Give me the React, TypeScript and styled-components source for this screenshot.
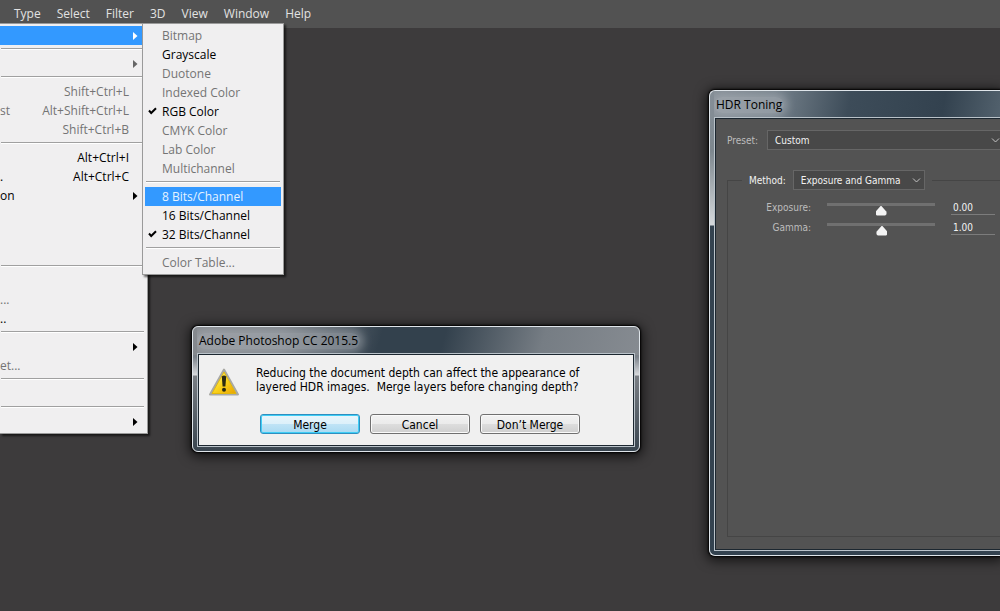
import React from "react";
import styled, { createGlobalStyle, css } from "styled-components";

const uiFont = `"Open Sans", "Noto Sans", sans-serif`;
const dialogFont = `"DejaVu Sans Condensed", "DejaVu Sans", sans-serif`;

const GlobalStyle = createGlobalStyle`
  * { box-sizing: border-box; }
  html, body { height: 100%; }
  body { margin: 0; background: #3d3b3c; overflow: hidden; font-family: ${uiFont}; font-size: 12px; }
  #root { height: 100%; }
  button, input, select { font: inherit; color: inherit; margin: 0; }
`;

const Workspace = styled.main`
  position: relative;
  min-height: 100%;
  overflow: hidden;
`;

const MenuBar = styled.nav`
  display: flex;
  height: 28px;
  padding: 0 6px;
  background: #525252;
  color: #e2e2e2;
`;

const MenuBarItem = styled.button`
  border: 0;
  padding: 0 8px;
  background: none;
  line-height: 28px;
`;

const Menu = styled.div<{ $left: number; $width: number }>`
  position: absolute;
  top: 23px;
  left: ${(p) => p.$left}px;
  width: ${(p) => p.$width}px;
  padding: 2px;
  background: #f0eff0;
  border: 1px solid #9a9a9a;
  box-shadow: 2px 2px 2px rgba(0, 0, 0, 0.6);
`;

const RootMenu = styled(Menu)`
  padding-left: 0;
  border-left: 0;
`;

const MenuItem = styled.button<{ $active?: boolean; $inset?: boolean }>`
  display: flex;
  align-items: center;
  width: 100%;
  height: 19px;
  border: 0;
  padding: 0 ${(p) => (p.$inset ? 17 : 0)}px;
  position: relative;
  background: ${(p) => (p.$active ? "#3399ff" : "none")};
  color: ${(p) => (p.$active ? "#e6f3ff" : "#000")};
  line-height: 19px;
  text-align: left;
  white-space: pre;
  &:disabled { color: #747474; }
`;

const Shortcut = styled.span`
  margin-left: auto;
  padding-right: 16px;
`;

const ArrowSlot = styled.svg`
  margin-left: auto;
  margin-right: 7px;
`;

const CheckMark = styled.svg`
  position: absolute;
  left: 3px;
  top: 5px;
`;

const Separator = styled.hr`
  height: 2px;
  margin: 3px 1px 4px;
  border: 0;
  border-top: 1px solid #a0a0a0;
  background: #fff;
`;

const frame = css`
  position: absolute;
  display: flex;
  flex-direction: column;
  border: 1px solid #dfe5ea;
  padding: 0 4px 4px;
  color: #000;
`;

const HdrWindow = styled.section`
  ${frame}
  top: 90px;
  left: 709px;
  right: 0;
  height: 466px;
  border-right: 0;
  padding-right: 0;
  border-radius: 6px 0 0 6px;
  background:
    linear-gradient(100deg, #858e96 0, #75818b 22%, #3d4c59 48%, #33424f 80%, #52616d 100%) top / 100% 28px no-repeat,
    linear-gradient(#87919a 0, #7d878e 60px, #d5d9dc 134px, #33424f 135px, #33424f 100%);
  box-shadow: 0 2px 12px 3px rgba(0, 0, 0, 0.65), 0 0 2px 1px #000;
`;

const AlertWindow = styled.section`
  ${frame}
  top: 326px;
  left: 192px;
  width: 448px;
  border-radius: 6px;
  background:
    linear-gradient(105deg, #85898e 0, #7c8288 20%, #33414d 42%, #33414d 56%, #767d84 78%, #868b91 100%) top / 100% 28px no-repeat,
    linear-gradient(#85898e 0, #7b828a 30px, #d8dadd 48px, #7a7f85 49px, #39454f 100%);
  box-shadow: 0 2px 12px 3px rgba(0, 0, 0, 0.65), 0 0 2px 1px #000;
`;

const TitleBar = styled.header`
  display: flex;
  align-items: center;
  height: 27px;
  overflow: hidden;
`;

const Title = styled.h1`
  margin: 0;
  padding: 0 2px;
  border-radius: 8px;
  background: rgba(182, 187, 192, 0.45);
  box-shadow: 0 0 8px 4px rgba(182, 187, 192, 0.45);
  font-size: 12px;
  font-weight: 400;
  line-height: 16px;
  white-space: nowrap;
`;

const Client = styled.div`
  flex: 1;
  border: 1px solid #1c2730;
  outline: 1px solid #b9c2c9;
  margin: 0 1px 1px;
`;

const AlertBody = styled(Client)`
  display: grid;
  grid-template-columns: 47px 1fr;
  padding: 11px 10px 10px;
  background: #f0f0f0;
  font-family: ${dialogFont};
`;

const Message = styled.p`
  margin: 0;
  line-height: 14px;
  white-space: pre;
`;

const WarningIcon = styled.svg`
  margin-top: 1px;
`;

const Actions = styled.div`
  grid-column: 1 / -1;
  display: flex;
  gap: 10px;
  padding: 17px 0 1px 51px;
`;

const ActionButton = styled.button<{ $primary?: boolean }>`
  width: 100px;
  height: 20px;
  padding: 2px 0 0;
  border: 1px solid ${(p) => (p.$primary ? "#2e8fc0" : "#707070")};
  border-radius: 3px;
  background: ${(p) =>
    p.$primary
      ? "linear-gradient(#e9f5fb 0, #dcf0fa 50%, #bfe3f6 51%, #a9daf2 100%)"
      : "linear-gradient(#f2f2f2 0, #ebebeb 50%, #dddddd 51%, #cfcfcf 100%)"};
  box-shadow: ${(p) => (p.$primary ? "inset 0 0 0 1px #3fcdf5" : "inset 0 0 0 1px #fafafa")};
  line-height: 16px;
`;

const HdrBody = styled(Client)`
  display: flex;
  flex-direction: column;
  margin-right: 0;
  border-right: 0;
  padding: 11px 0 12px 11px;
  background: #535353;
  color: #f0f0f0;
  font-family: ${dialogFont};
  font-size: 10px;
`;

const PresetRow = styled.div`
  display: flex;
  align-items: center;
  gap: 9px;
  margin-bottom: 20px;
`;

const FieldLabel = styled.label<{ $bright?: boolean }>`
  color: ${(p) => (p.$bright ? "#f2f2f2" : "#bdbdbd")};
`;

const SelectBox = styled.span<{ $width?: number }>`
  display: flex;
  position: relative;
  ${(p) => (p.$width ? `width: ${p.$width}px;` : "flex: 1; margin-right: -4px;")}
  height: 20px;
`;

const Select = styled.select`
  appearance: none;
  width: 100%;
  border: 1px solid #666;
  border-radius: 0;
  padding: 0 7px;
  background: #484848;
  color: #f2f2f2;
`;

const Chevron = styled.svg`
  position: absolute;
  right: 4px;
  top: 7px;
  pointer-events: none;
`;

const Group = styled.fieldset`
  flex: 1;
  min-width: 0;
  margin: 0;
  border: 1px solid #454545;
  border-right: 0;
  padding: 9px 0 0 14px;
`;

const Legend = styled.legend`
  display: flex;
  align-items: center;
  gap: 7px;
  padding: 0 7px;
`;

const SliderRow = styled.div`
  display: grid;
  grid-template-columns: 69px 108px 44px;
  column-gap: 16px;
  height: 20px;
  align-items: start;
  line-height: 18px;
`;

const SliderLabel = styled(FieldLabel)`
  text-align: right;
`;

const Slider = styled.input`
  appearance: none;
  width: 108px;
  height: 16px;
  background: linear-gradient(#707070, #707070) 0 4px / 100% 3px no-repeat;
  &::-webkit-slider-thumb {
    appearance: none;
    width: 11px;
    height: 10px;
    margin-top: 7px;
    background: #f4f4f4;
    clip-path: polygon(50% 0, 100% 62%, 100% 88%, 88% 100%, 12% 100%, 0 88%, 0 62%);
  }
`;

const ValueInput = styled.input`
  width: 44px;
  height: 16px;
  border: 0;
  border-bottom: 1px solid #7c7c7c;
  padding: 2px 2px 0;
  background: none;
  color: #f2f2f2;
`;

type Entry =
  | "separator"
  | { label?: string; shortcut?: string; arrow?: boolean; checked?: boolean; active?: boolean; disabled?: boolean };

const adjustmentEntries: Entry[] = [
  { arrow: true, active: true },
  "separator",
  { arrow: true, disabled: true },
  "separator",
  { shortcut: "Shift+Ctrl+L", disabled: true },
  { label: "st", shortcut: "Alt+Shift+Ctrl+L", disabled: true },
  { shortcut: "Shift+Ctrl+B", disabled: true },
  "separator",
  { shortcut: "Alt+Ctrl+I" },
  { label: ".", shortcut: "Alt+Ctrl+C" },
  { label: "on", arrow: true },
  {},
  {},
  {},
  "separator",
  {},
  { label: "...", disabled: true },
  { label: ".." },
  "separator",
  { arrow: true },
  { label: "et...", disabled: true },
  "separator",
  {},
  "separator",
  { arrow: true },
];

const modeEntries: Entry[] = [
  { label: "Bitmap", disabled: true },
  { label: "Grayscale" },
  { label: "Duotone", disabled: true },
  { label: "Indexed Color", disabled: true },
  { label: "RGB Color", checked: true },
  { label: "CMYK Color", disabled: true },
  { label: "Lab Color", disabled: true },
  { label: "Multichannel", disabled: true },
  "separator",
  { label: "8 Bits/Channel", active: true },
  { label: "16 Bits/Channel" },
  { label: "32 Bits/Channel", checked: true },
  "separator",
  { label: "Color Table...", disabled: true },
];

function MenuEntries({ entries, inset }: { entries: Entry[]; inset?: boolean }) {
  return (
    <>
      {entries.map((entry, i) =>
        entry === "separator" ? (
          <Separator key={i} />
        ) : (
          <MenuItem key={i} $active={entry.active} $inset={inset} disabled={entry.disabled}>
            {entry.checked && (
              <CheckMark width="9" height="8" viewBox="0 0 9 8" aria-hidden="true">
                <path d="M1 3.5 3.2 6 8 1.2" fill="none" stroke="#000" strokeWidth="2" />
              </CheckMark>
            )}
            {entry.label}
            {entry.shortcut && <Shortcut>{entry.shortcut}</Shortcut>}
            {entry.arrow && (
              <ArrowSlot width="5" height="8" viewBox="0 0 5 8" aria-hidden="true">
                <path d="M0 0 4.5 4 0 8Z" fill={entry.active ? "#fff" : entry.disabled ? "#666" : "#000"} />
              </ArrowSlot>
            )}
          </MenuItem>
        ),
      )}
    </>
  );
}

function Dropdown({ id, value, width }: { id: string; value: string; width?: number }) {
  return (
    <SelectBox $width={width}>
      <Select id={id} defaultValue={value}>
        <option>{value}</option>
      </Select>
      <Chevron width="9" height="7" viewBox="0 0 9 7" aria-hidden="true">
        <path d="M1 1.5 4.5 5 8 1.5" fill="none" stroke="#c4c4c4" />
      </Chevron>
    </SelectBox>
  );
}

function SliderField({ id, label, position, value }: { id: string; label: string; position: number; value: string }) {
  return (
    <SliderRow>
      <SliderLabel htmlFor={id}>{label}</SliderLabel>
      <Slider type="range" id={id} defaultValue={position} />
      <ValueInput aria-label={label} defaultValue={value} />
    </SliderRow>
  );
}

export default function App() {
  return (
    <Workspace>
      <GlobalStyle />
      <MenuBar>
        {["Type", "Select", "Filter", "3D", "View", "Window", "Help"].map((name) => (
          <MenuBarItem key={name}>{name}</MenuBarItem>
        ))}
      </MenuBar>

      <HdrWindow>
        <TitleBar>
          <Title>HDR Toning</Title>
        </TitleBar>
        <HdrBody>
          <PresetRow>
            <FieldLabel htmlFor="preset">Preset:</FieldLabel>
            <Dropdown id="preset" value="Custom" />
          </PresetRow>
          <Group>
            <Legend>
              <FieldLabel htmlFor="method" $bright>
                Method:
              </FieldLabel>
              <Dropdown id="method" value="Exposure and Gamma" width={132} />
            </Legend>
            <SliderField id="exposure" label="Exposure:" position={50} value="0.00" />
            <SliderField id="gamma" label="Gamma:" position={51} value="1.00" />
          </Group>
        </HdrBody>
      </HdrWindow>

      <AlertWindow role="alertdialog">
        <TitleBar>
          <Title>Adobe Photoshop CC 2015.5</Title>
        </TitleBar>
        <AlertBody>
          <WarningIcon width="32" height="30" viewBox="0 0 32 30" aria-hidden="true">
            <defs>
              <linearGradient id="warn" x1="0" y1="0" x2="1" y2="1">
                <stop offset="0.2" stopColor="#fff06a" />
                <stop offset="0.5" stopColor="#fbd41c" />
                <stop offset="1" stopColor="#e8a200" />
              </linearGradient>
            </defs>
            <path d="M15 2.500 29 27.500H1Z" fill="#b9b9b4" stroke="#a9a9a4" strokeWidth="2" strokeLinejoin="round" />
            <path d="M15 5 27 26.500H3Z" fill="url(#warn)" stroke="#e2b80c" strokeWidth="1" strokeLinejoin="round" />
            <path d="M12.800 9.500Q15 7.500 17.200 9.500L16.400 19.500H13.600Z" fill="#2b2a12" />
            <circle cx="15" cy="22.800" r="2" fill="#2b2a12" />
          </WarningIcon>
          <Message>
            {"Reducing the document depth can affect the appearance of\nlayered HDR images.  Merge layers before changing depth?"}
          </Message>
          <Actions>
            <ActionButton $primary>Merge</ActionButton>
            <ActionButton>Cancel</ActionButton>
            <ActionButton>Don’t Merge</ActionButton>
          </Actions>
        </AlertBody>
      </AlertWindow>

      <RootMenu $left={0} $width={148}>
        <MenuEntries entries={adjustmentEntries} />
      </RootMenu>
      <Menu $left={142} $width={142}>
        <MenuEntries entries={modeEntries} inset />
      </Menu>
    </Workspace>
  );
}
